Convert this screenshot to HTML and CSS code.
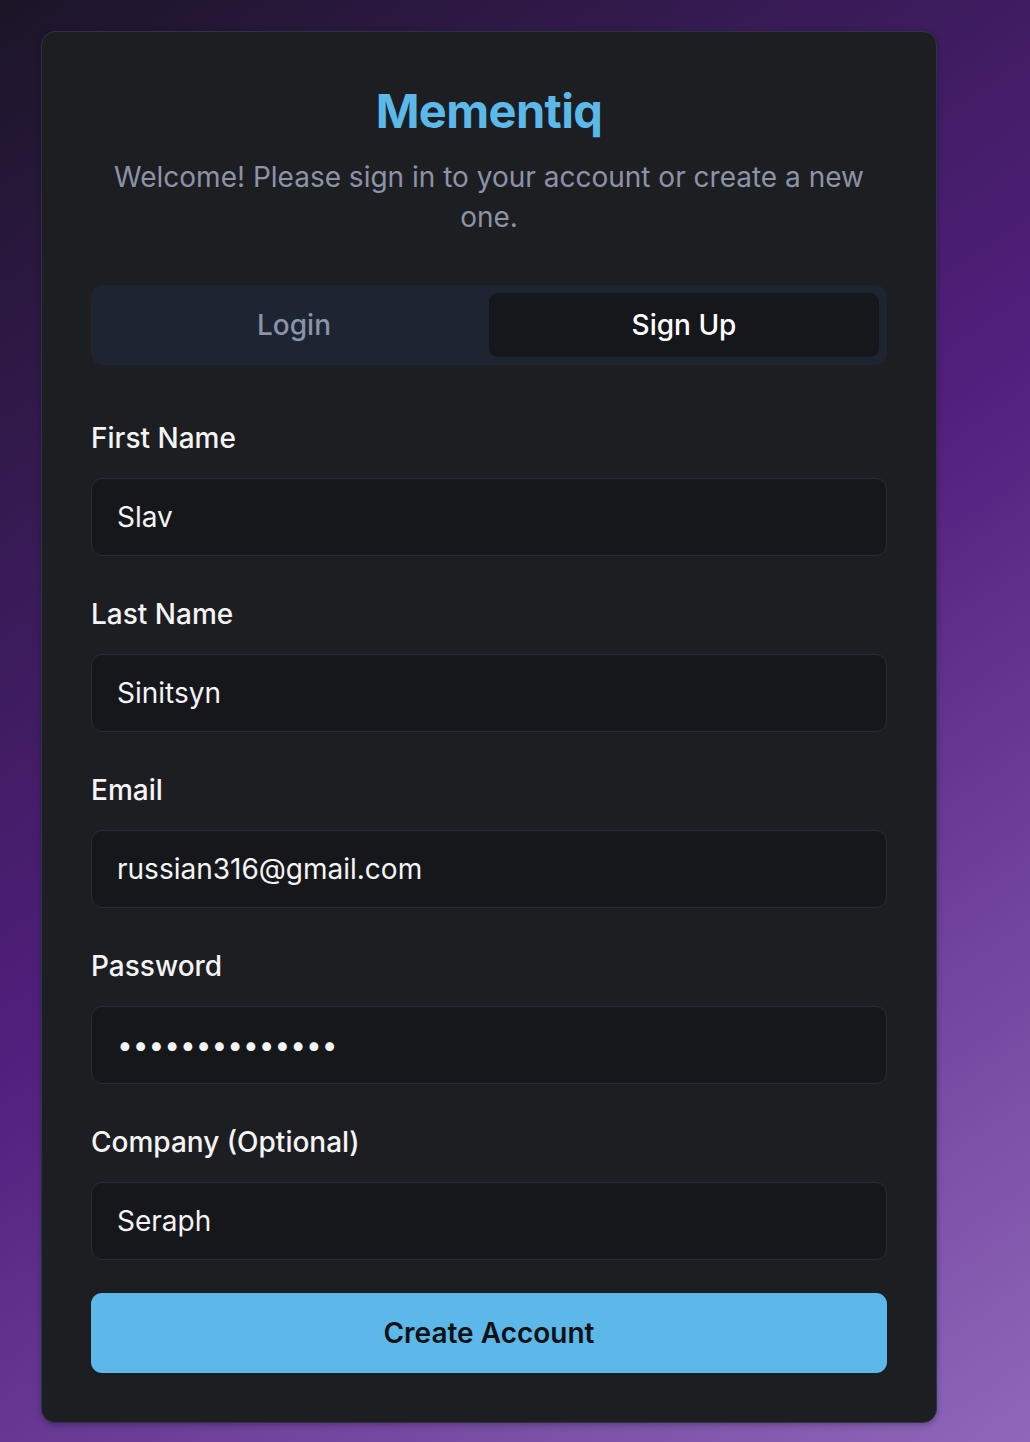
FILE: index.html
```html
<!DOCTYPE html>
<html lang="en">
<head>
<meta charset="utf-8">
<title>Mementiq</title>
<link rel="stylesheet" href="styles.css">
</head>
<body>
<main class="card">
  <header class="header">
    <h1 class="title">Mementiq</h1>
    <p class="subtitle">Welcome! Please sign in to your account or create a new one.</p>
  </header>
  <div class="tabs">
    <button class="tab" type="button">Login</button>
    <button class="tab tab-active" type="button">Sign Up</button>
  </div>
  <form class="form">
    <div class="field">
      <label class="label" for="first">First Name</label>
      <input class="input" id="first" type="text" value="Slav">
    </div>
    <div class="field">
      <label class="label" for="last">Last Name</label>
      <input class="input" id="last" type="text" value="Sinitsyn">
    </div>
    <div class="field">
      <label class="label" for="email">Email</label>
      <input class="input" id="email" type="email" value="russian316@gmail.com">
    </div>
    <div class="field">
      <label class="label" for="password">Password</label>
      <input class="input input-password" id="password" type="password" value="abcdefghijklmn">
    </div>
    <div class="field">
      <label class="label" for="company">Company (Optional)</label>
      <input class="input" id="company" type="text" value="Seraph">
    </div>
    <button class="submit" type="button">Create Account</button>
  </form>
</main>
</body>
</html>
```

FILE: styles.css
```css
* {
  box-sizing: border-box;
}

html, body {
  margin: 0;
  min-height: 100%;
}

body {
  min-height: 1442px;
  padding: 31px 0 0 41px;
  font-family: Inter, "Noto Sans", "DejaVu Sans", sans-serif;
  background: linear-gradient(145deg, #1b1527 0%, #52207f 50%, #8f67ba 100%);
}

.card {
  width: 896px;
  padding: 49px;
  background: #1d1e22;
  border: 1px solid #2b3344;
  border-radius: 14px;
  box-shadow: 0 2px 6px rgba(0, 0, 0, 0.25);
}

.header {
  text-align: center;
}

.title {
  margin: 0;
  font-size: 47px;
  line-height: 60px;
  font-weight: 700;
  color: #5bb9ea;
  letter-spacing: -0.6px;
}

.subtitle {
  margin: 16px 0 0;
  font-size: 28px;
  line-height: 40px;
  color: #8b93a7;
}

.tabs {
  margin-top: 48px;
  height: 80px;
  padding: 8px;
  display: grid;
  grid-template-columns: 1fr 1fr;
  background: #1d2432;
  border-radius: 12px;
}

.tab {
  border: 0;
  background: transparent;
  border-radius: 9px;
  font-family: inherit;
  font-size: 28px;
  font-weight: 500;
  color: #8b93a7;
  padding: 0;
}

.tab-active {
  background: #16171b;
  color: #ffffff;
}

.form {
  margin-top: 53px;
  display: flex;
  flex-direction: column;
  gap: 38px;
}

.field {
  display: flex;
  flex-direction: column;
  gap: 20px;
}

.label {
  font-size: 28px;
  line-height: 40px;
  font-weight: 500;
  color: #f4f4f5;
}

.input {
  height: 78px;
  width: 100%;
  padding: 0 25px;
  background: #16171b;
  border: 1.5px solid #252c3c;
  border-radius: 11px;
  font-family: inherit;
  font-size: 28px;
  color: #f4f4f5;
  outline: none;
}

.input-password {
  letter-spacing: 0;
}

.submit {
  margin-top: -5px;
  height: 80px;
  border: 0;
  border-radius: 11px;
  background: #5cb8e8;
  font-family: inherit;
  font-size: 28px;
  font-weight: 600;
  color: #0f1115;
}
```
